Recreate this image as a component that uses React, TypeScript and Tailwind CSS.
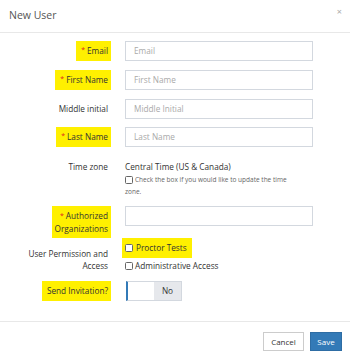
import React from "react";

const Star = () => (
  <span className="text-[#e02020] text-[7px] mr-[2px] relative top-[-1px]">*</span>
);

function Label({
  children,
  hl,
  req,
}: {
  children: React.ReactNode;
  hl?: boolean;
  req?: boolean;
}) {
  return (
    <span
      className={`flex items-center h-[20px] pl-[5px] pr-[3px] text-[8.25px] text-[#333] ${
        hl ? "bg-[#fff000]" : ""
      }`}
    >
      {req && <Star />}
      {children}
    </span>
  );
}

function InputRow({
  label,
  placeholder,
  hl,
  req,
  mb,
}: {
  label: string;
  placeholder: string;
  hl?: boolean;
  req?: boolean;
  mb: string;
}) {
  return (
    <div className={`flex items-center ${mb}`}>
      <div className="w-[111px] flex justify-end">
        <Label hl={hl} req={req}>
          {label}
        </Label>
      </div>
      <div className="ml-[14px] w-[188px] h-[20px] border border-[#d3d8df] flex items-center pl-[8px] text-[8.25px] text-[#a9a9a9]">
        {placeholder}
      </div>
    </div>
  );
}

const Box = () => (
  <span className="block w-[8px] h-[8px] border border-[#666] rounded-[1.5px] bg-white shrink-0" />
);

export default function App() {
  return (
    <div
      className="w-[350px] h-[359px] bg-white overflow-hidden"
      style={{ fontFamily: '"Open Sans", "Noto Sans", sans-serif' }}
    >
      <div className="h-[33px] border-b border-[#e8e8e8] flex justify-between">
        <div className="pl-[9px] pt-[8px] text-[10.5px] leading-[15px] text-[#555]">New User</div>
        <div className="pr-[8px] pt-[5px] text-[9px] leading-[13px] text-[#aaa]">×</div>
      </div>

      <div className="pt-[8px]">
        <InputRow label="Email" placeholder="Email" hl req mb="mb-[9px]" />
        <InputRow label="First Name" placeholder="First Name" hl req mb="mb-[9px]" />
        <InputRow label="Middle initial" placeholder="Middle Initial" mb="mb-[8px]" />
        <InputRow label="Last Name" placeholder="Last Name" hl req mb="mb-[13px]" />

        <div className="flex items-start mb-[8px]">
          <div className="w-[111px] flex justify-end">
            <span className="pr-[3px] text-[8.25px] leading-[14px] text-[#333]">Time zone</span>
          </div>
          <div className="ml-[14px] w-[188px]">
            <div className="text-[8.25px] leading-[14px] text-[#333]">Central Time (US &amp; Canada)</div>
            <div className="text-[6.5px] leading-[12px] text-[#666]">
              <div className="flex items-center gap-[2px] whitespace-nowrap">
                <Box />
                <span>Check the box if you would like to update the time</span>
              </div>
              <div>zone.</div>
            </div>
          </div>
        </div>

        <div className="flex items-start">
          <div className="w-[111px] flex justify-end">
            <span className="bg-[#fff000] pl-[3px] pr-[3px] pt-[4px] pb-[3px] text-right text-[8.25px] leading-[12px] text-[#333]">
              <Star />
              Authorized
              <br />
              Organizations
            </span>
          </div>
          <div className="ml-[14px] w-[188px] h-[20px] border border-[#d3d8df]" />
        </div>

        <div className="flex items-end mb-[9px]">
          <div className="w-[111px] flex justify-end">
            <span className="pr-[3px] text-right text-[8.25px] leading-[12px] text-[#333]">
              User Permission and
              <br />
              Access
            </span>
          </div>
          <div className="ml-[14px] w-[188px] flex flex-col items-start">
            <div className="-ml-[3px] mb-[2px] flex items-center gap-[3px] h-[20px] w-[70px] pl-[3px] bg-[#fff000] text-[8.25px] leading-[12px] text-[#333]">
              <Box />
              <span>Proctor Tests</span>
            </div>
            <div className="flex items-center gap-[2px] h-[12px] text-[8.25px] leading-[12px] text-[#333]">
              <Box />
              <span>Administrative Access</span>
            </div>
          </div>
        </div>

        <div className="flex items-center">
          <div className="w-[111px] flex justify-end">
            <Label hl>Send Invitation?</Label>
          </div>
          <div className="ml-[15px] flex h-[20px] w-[56px] border border-[#d3d8df] border-l-[2px] border-l-[#337ab7]">
            <div className="w-[26px] bg-white" />
            <div className="flex-1 bg-[#e6e8ec] flex items-center justify-center text-[8.25px] text-[#333]">
              No
            </div>
          </div>
        </div>
      </div>

      <div className="mt-[20px] border-t border-[#e8e8e8] pt-[10px] pr-[8px] flex justify-end gap-[6px]">
        <div className="w-[41px] h-[19px] border border-[#ccc] bg-white flex items-center justify-center text-[8px] text-[#333]">
          Cancel
        </div>
        <div className="w-[32px] h-[19px] border border-[#2e6da4] bg-[#337ab7] flex items-center justify-center text-[8px] text-white">
          Save
        </div>
      </div>
    </div>
  );
}
